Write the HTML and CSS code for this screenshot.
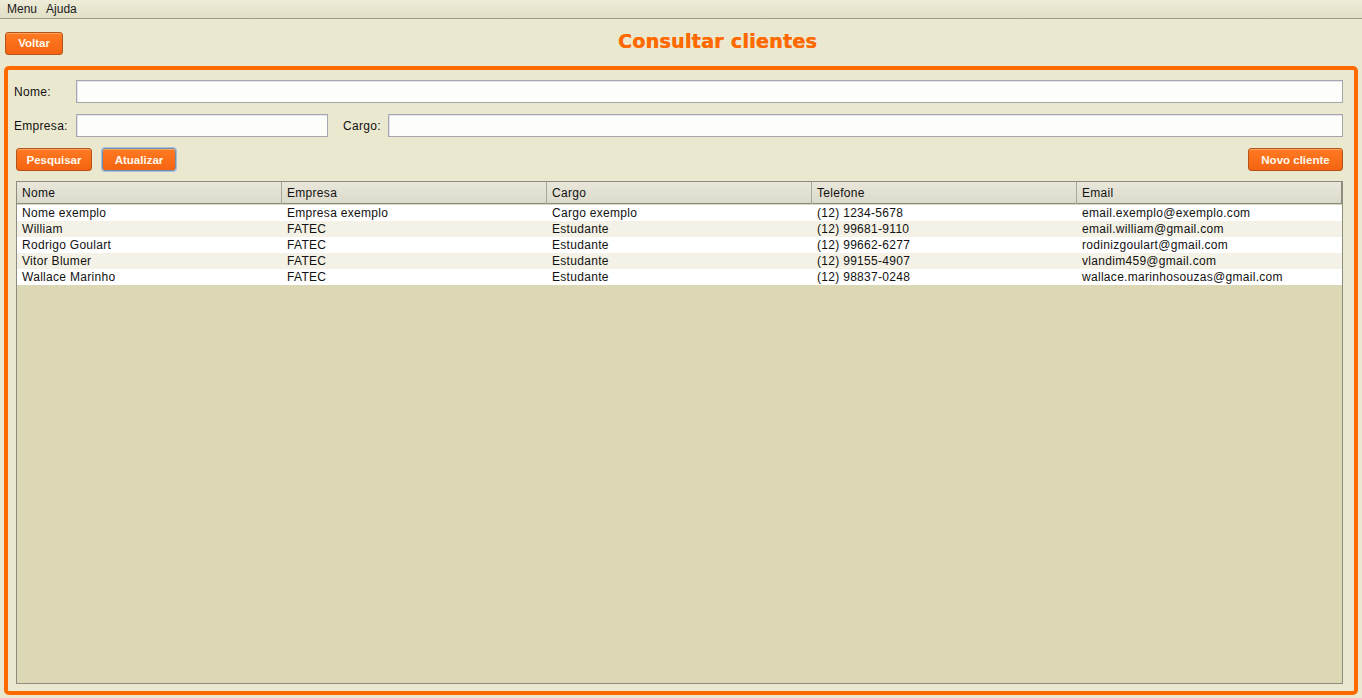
FILE: index.html
```html
<!DOCTYPE html>
<html lang="pt">
<head>
<meta charset="utf-8">
<title>Consultar clientes</title>
<link rel="stylesheet" href="styles.css">
</head>
<body>
<div class="app">
  <div class="menubar">
    <span class="menu-item">Menu</span>
    <span class="menu-item">Ajuda</span>
  </div>
  <div class="topbar">
    <button class="btn btn-voltar">Voltar</button>
    <h1 class="title">Consultar clientes</h1>
  </div>
  <div class="panel">
    <div class="form-row">
      <label class="lbl lbl-first">Nome:</label>
      <input class="field field-grow" type="text">
    </div>
    <div class="form-row">
      <label class="lbl lbl-first">Empresa:</label>
      <input class="field field-empresa" type="text">
      <label class="lbl lbl-cargo">Cargo:</label>
      <input class="field field-grow" type="text">
    </div>
    <div class="btn-row">
      <button class="btn btn-pesquisar">Pesquisar</button>
      <button class="btn btn-atualizar">Atualizar</button>
      <span class="spacer"></span>
      <button class="btn btn-novo">Novo cliente</button>
    </div>
    <div class="table">
      <div class="thead">
        <div class="th">Nome</div>
        <div class="th">Empresa</div>
        <div class="th">Cargo</div>
        <div class="th">Telefone</div>
        <div class="th th-last">Email</div>
      </div>
      <div class="tr">
        <div class="td">Nome exemplo</div><div class="td">Empresa exemplo</div><div class="td">Cargo exemplo</div><div class="td">(12) 1234-5678</div><div class="td">email.exemplo@exemplo.com</div>
      </div>
      <div class="tr alt">
        <div class="td">William</div><div class="td">FATEC</div><div class="td">Estudante</div><div class="td">(12) 99681-9110</div><div class="td">email.william@gmail.com</div>
      </div>
      <div class="tr">
        <div class="td">Rodrigo Goulart</div><div class="td">FATEC</div><div class="td">Estudante</div><div class="td">(12) 99662-6277</div><div class="td">rodinizgoulart@gmail.com</div>
      </div>
      <div class="tr alt">
        <div class="td">Vitor Blumer</div><div class="td">FATEC</div><div class="td">Estudante</div><div class="td">(12) 99155-4907</div><div class="td">vlandim459@gmail.com</div>
      </div>
      <div class="tr">
        <div class="td">Wallace Marinho</div><div class="td">FATEC</div><div class="td">Estudante</div><div class="td">(12) 98837-0248</div><div class="td">wallace.marinhosouzas@gmail.com</div>
      </div>
      <div class="tbody-empty"></div>
    </div>
  </div>
</div>
</body>
</html>
```
FILE: styles.css
```css
html, body {
  margin: 0;
  padding: 0;
  height: 100%;
}
body {
  background: #ebe8d0;
  font-family: "Liberation Sans", Arial, sans-serif;
  font-size: 12px;
  letter-spacing: 0.3px;
  color: #111;
  overflow: hidden;
}
.app {
  height: 698px;
  display: flex;
  flex-direction: column;
}
.menubar {
  height: 18px;
  display: flex;
  align-items: center;
  gap: 9px;
  padding-left: 7px;
  border-bottom: 1px solid #9c9a8c;
  background: linear-gradient(#eeecd8, #e2dfc6);
  line-height: 18px;
}
.menu-item {
  color: #1a1a1a;
  letter-spacing: 0;
}
.topbar {
  height: 47px;
  display: flex;
  align-items: center;
  padding-left: 5px;
}
.title {
  flex: 1;
  margin: 0;
  text-align: center;
  font-family: "DejaVu Sans", "Liberation Sans", Arial, sans-serif;
  font-weight: bold;
  font-size: 19px;
  color: #ff6a00;
  letter-spacing: 0.3px;
  padding-bottom: 3px;
  padding-left: 10px;
  text-shadow: 0.4px 0 0 #ff6a00;
}
.btn {
  height: 23px;
  padding: 0;
  border: 1px solid #b4531a;
  border-radius: 3px;
  background: linear-gradient(#ff7a22, #f56410);
  color: #fff8ec;
  font-family: "Liberation Sans", Arial, sans-serif;
  font-weight: bold;
  font-size: 11.5px;
  letter-spacing: 0;
  box-shadow: inset 0 1px 0 rgba(255, 190, 140, 0.6);
}
.btn-voltar {
  width: 58px;
  margin-top: 1px;
}
.panel {
  flex: 1;
  margin: 0 4px 3px 4px;
  border: 4px solid #ff6a00;
  border-radius: 5px;
  padding: 10px 11px 7px 6px;
  display: flex;
  flex-direction: column;
}
.form-row {
  display: flex;
  align-items: center;
  height: 23px;
  margin-bottom: 11px;
}
.lbl {
  font-size: 12px;
  color: #111;
}
.lbl-first {
  width: 62px;
  flex: none;
}
.lbl-cargo {
  margin-left: 15px;
  width: 45px;
}
.field {
  height: 23px;
  box-sizing: border-box;
  border: 1px solid #a6a6b0;
  background: #fdfdf9;
  box-shadow: inset 1px 1px 0 #e4e4ea;
  margin: 0;
  padding: 0 4px;
  font-family: "Liberation Sans", Arial, sans-serif;
  font-size: 12px;
}
.field-grow {
  flex: 1;
  min-width: 0;
}
.field-empresa {
  width: 252px;
  flex: none;
}
.btn-row {
  display: flex;
  align-items: center;
  height: 23px;
  padding-left: 2px;
  margin-bottom: 10px;
}
.btn-pesquisar {
  width: 76px;
}
.btn-atualizar {
  width: 74px;
  margin-left: 10px;
  border: 1px solid #6f8fb2;
  box-shadow: 0 0 0 1px #a9bfd6, inset 0 1px 0 rgba(255, 190, 140, 0.6);
}
.spacer {
  flex: 1;
}
.btn-novo {
  width: 95px;
}
.table {
  flex: 1;
  margin-left: 2px;
  border: 1px solid #8e8c80;
  background: #dcd8b6;
  display: flex;
  flex-direction: column;
}
.thead {
  display: grid;
  grid-template-columns: repeat(5, 1fr);
  height: 21px;
  background: linear-gradient(#e9e7da, #dcdacb);
  border-bottom: 1px solid #8e8c80;
}
.th {
  border-right: 1px solid #a9a79a;
  padding-left: 5px;
  line-height: 22px;
  color: #111;
}
.th-last {
  border-right: 1px solid #8e8c80;
}
.tr {
  display: grid;
  grid-template-columns: repeat(5, 1fr);
  height: 16px;
  background: #ffffff;
}
.thead + .tr {
  margin-top: 1px;
}
.tr.alt {
  background: #f4f2e6;
}
.td {
  padding-left: 5px;
  line-height: 17px;
  white-space: nowrap;
  overflow: hidden;
  color: #111;
}
.tbody-empty {
  flex: 1;
}
```
